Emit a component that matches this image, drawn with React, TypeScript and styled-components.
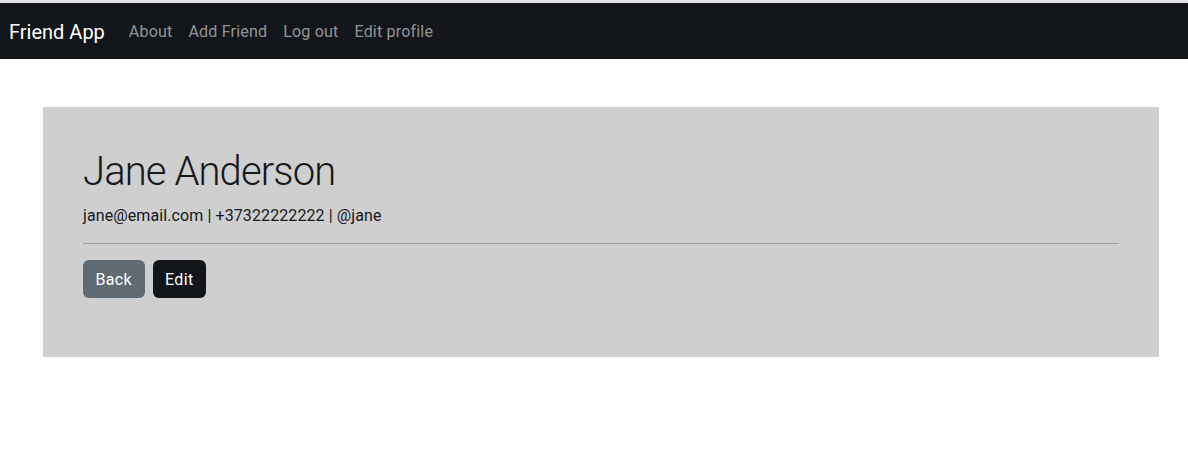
import React from "react";
import styled, { createGlobalStyle } from "styled-components";

const Global = createGlobalStyle`
  html, body { margin: 0; padding: 0; background: #ffffff; }
  body {
    font-family: Roboto, "Noto Sans", "Liberation Sans", sans-serif;
    font-size: 16px;
    line-height: 1.5;
    color: #212529;
  }
`;

const Page = styled.div`
  display: flex;
  flex-direction: column;
  min-height: 470px;
`;

const Navbar = styled.nav`
  display: flex;
  align-items: center;
  height: 56px;
  padding: 1px 8px 0 9px;
  box-sizing: border-box;
  height: 59px;
  background: #121519;
  border-top: 3px solid #e3e3e3;
`;

const Brand = styled.a`
  font-size: 20px;
  line-height: 30px;
  color: #ffffff;
  margin-right: 16px;
  text-decoration: none;
`;

const NavList = styled.div`
  display: flex;
  align-items: center;
`;

const NavLink = styled.a`
  padding: 8px;
  color: rgba(255, 255, 255, 0.55);
  font-size: 16px;
  line-height: 24px;
  letter-spacing: 0.2px;
  text-decoration: none;
`;

const Card = styled.section`
  margin: 48px 29px 0 43px;
  padding: 40px 40px 59px;
  background: #cfcfcf;
`;

const Title = styled.h1`
  margin: 0 0 8px;
  padding-top: 1px;
  height: 47px;
  font-size: 40px;
  line-height: 48px;
  font-weight: 300;
  letter-spacing: -0.9px;
  color: #16181b;
`;

const Info = styled.p`
  margin: 0;
  padding-top: 1px;
  height: 23px;
  font-size: 16px;
  line-height: 24px;
  letter-spacing: 0.1px;
  color: #16181b;
`;

const Divider = styled.hr`
  margin: 16px 0;
  border: 0;
  border-top: 1px solid #9e9e9e;
`;

const Actions = styled.div`
  display: flex;
  gap: 8px;
`;

const Button = styled.button<{ $variant: "secondary" | "dark" }>`
  height: 38px;
  padding: 1px 12.5px 0;
  border: 0;
  border-radius: 6px;
  font-family: inherit;
  font-size: 16px;
  line-height: 24px;
  letter-spacing: 0.35px;
  color: #ffffff;
  background: ${(p) => (p.$variant === "secondary" ? "#5f6a73" : "#121519")};
  cursor: pointer;
`;

export default function App() {
  return (
    <Page>
      <Global />
      <Navbar>
        <Brand href="#">Friend App</Brand>
        <NavList>
          <NavLink href="#">About</NavLink>
          <NavLink href="#">Add Friend</NavLink>
          <NavLink href="#">Log out</NavLink>
          <NavLink href="#">Edit profile</NavLink>
        </NavList>
      </Navbar>
      <Card>
        <Title>Jane Anderson</Title>
        <Info>jane@email.com | +37322222222 | @jane</Info>
        <Divider />
        <Actions>
          <Button $variant="secondary">Back</Button>
          <Button $variant="dark">Edit</Button>
        </Actions>
      </Card>
    </Page>
  );
}
